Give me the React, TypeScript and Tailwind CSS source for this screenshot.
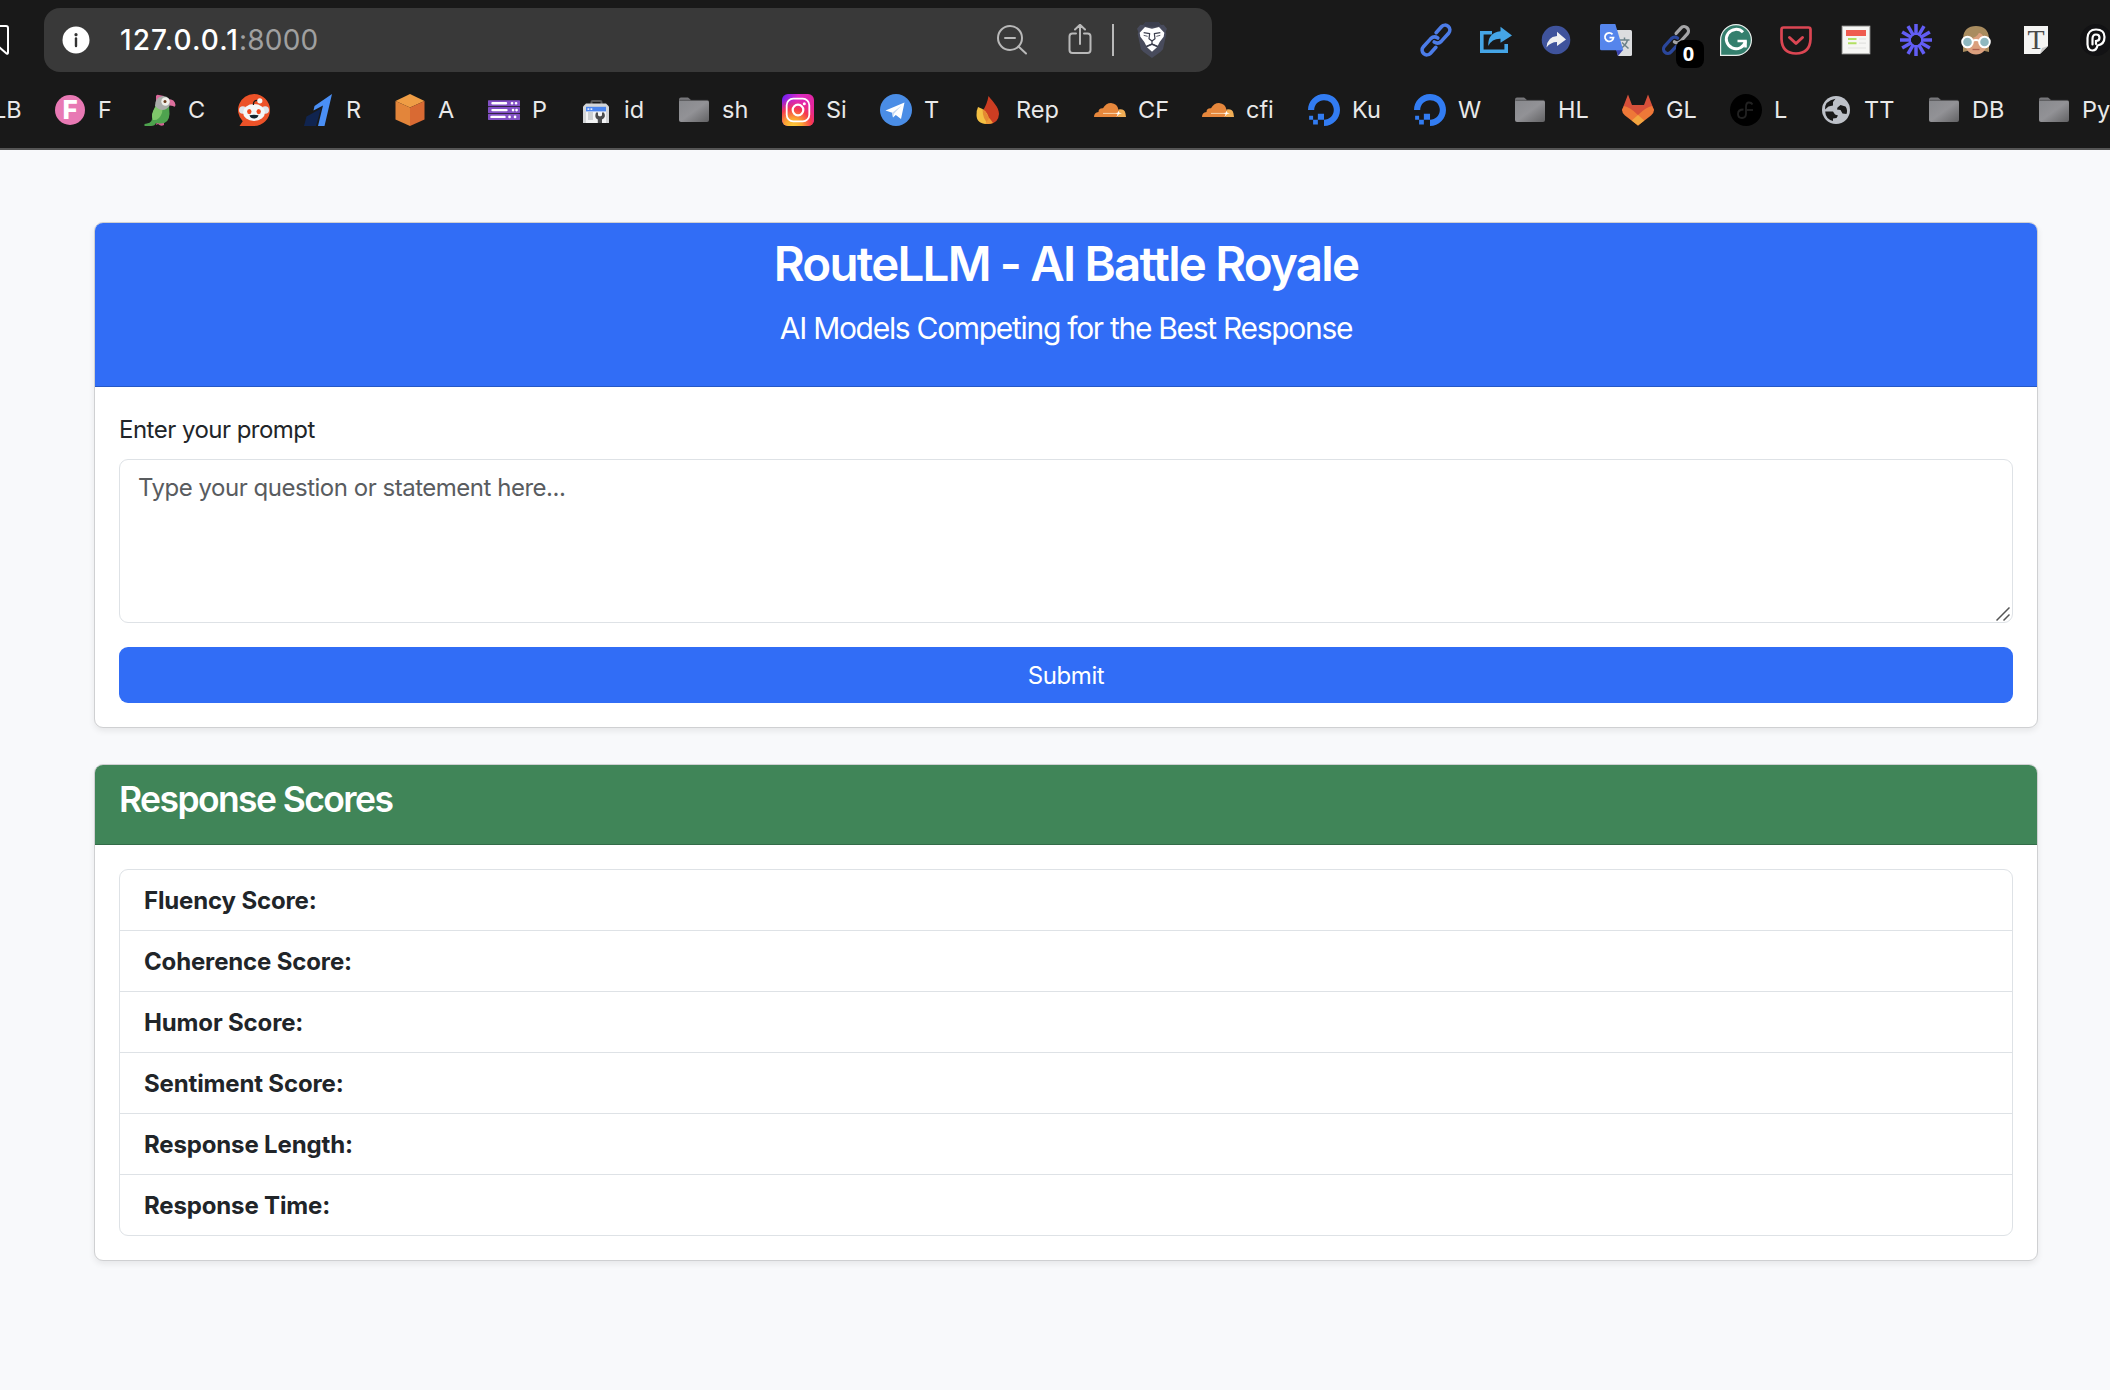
import type { ReactNode } from 'react';
import { SiDigitalocean } from 'react-icons/si';

const svg = 'block h-8 w-8 shrink-0 overflow-visible';

function Folder() {
  return (
    <svg viewBox="0 0 32 32" className={svg}>
      <defs>
        <linearGradient id="folderFill" x1="0" y1="0" x2="1" y2="1">
          <stop offset="0" stopColor="#88898d" />
          <stop offset="0.5" stopColor="#929296" />
          <stop offset="1" stopColor="#626264" />
        </linearGradient>
      </defs>
      <path d="M1 9V5.5Q1 3.5 3 3.5H10L12.5 5.5V9Z" fill="#77777a" />
      <rect x="1" y="6.2" width="30" height="21.8" rx="2" fill="url(#folderFill)" />
      <path d="M1.5 6.3H30" stroke="#4a4a4c" strokeWidth="0.8" />
    </svg>
  );
}

function LetterF() {
  return (
    <span className="mr-px ml-px flex h-[30px] w-[30px] shrink-0 items-center justify-center rounded-full bg-[#e879b4] text-[26px] leading-none font-extrabold text-white">
      F
    </span>
  );
}

function Parrot() {
  return (
    <svg viewBox="0 0 32 32" className={svg}>
      <path d="M12 8L12 2Q13 0 15 1L20 2L16 8Z" fill="#d9689a" />
      <path d="M24 5Q31 5 31.500 11Q31 14 29 12L23 11Z" fill="#dd6f9d" />
      <path d="M13 27H20L20 31Q17 33 14 30L12 31Z" fill="#d45f93" />
      <path d="M12 10Q9 18 8 22Q9 29 3 29.500L0.500 30V32H7Q11 32 12 29Q25 32 25.500 20L25 11Z" fill="#4ea34e" />
      <path d="M12 12Q6 20 9 26Q15 27 18 19L19 12Z" fill="#7fc66a" />
      <path d="M11 12Q11 3 19 2Q27 2 25.500 12Q19 20 11 12Z" fill="#a9aca9" />
      <circle cx="21.500" cy="7.500" r="4.200" fill="#efefeb" />
      <circle cx="21" cy="7.500" r="1.500" fill="#6b3c1d" />
    </svg>
  );
}

function Reddit() {
  return (
    <svg viewBox="0 0 32 32" className={svg}>
      <path d="M16 0A16 16 0 1 1 16 32H1.500L4.700 27.300A16 16 0 0 1 16 0Z" fill="#ec5228" />
      <circle cx="4.800" cy="16" r="3.800" fill="#dfe5ea" />
      <circle cx="27.200" cy="16" r="3.800" fill="#dfe5ea" />
      <ellipse cx="16" cy="18.500" rx="11" ry="8.500" fill="#f4f7f8" />
      <path d="M15.500 11Q15 6 20 6.500" fill="none" stroke="#1a1a1a" strokeWidth="1.300" />
      <circle cx="21.800" cy="6.800" r="2.600" fill="#f4f7f8" />
      <ellipse cx="11.300" cy="17.600" rx="2.200" ry="2.600" fill="#f04a1e" />
      <ellipse cx="20.700" cy="17.600" rx="2.200" ry="2.600" fill="#f04a1e" />
      <path d="M11.500 21.300Q16 20.300 20.500 21.300Q19.500 24.500 16 24.500Q12.500 24.500 11.500 21.300Z" fill="#14252e" />
    </svg>
  );
}

function BlueOne() {
  return (
    <svg viewBox="0 0 32 32" className={svg}>
      <path d="M30 0L12.500 12L11.500 16.500L21 11.500L16 32H22.500Z" fill="#4a8ff5" />
      <path d="M19 14.500L4.500 22.500L2 32H14Z" fill="#10244f" />
    </svg>
  );
}

function Cube() {
  return (
    <svg viewBox="0 0 32 32" className={svg}>
      <path d="M16 0L30.500 7L16 13.500L1.500 7Z" fill="#ef9d45" />
      <path d="M1.500 7L16 13.500V32L1.500 25.500Z" fill="#e3853a" />
      <path d="M30.500 7L16 13.500V32L30.500 25.500Z" fill="#d96a33" />
    </svg>
  );
}

function Servers() {
  return (
    <svg viewBox="0 0 32 32" className={svg}>
      {[6.2, 13, 19.8].map((y) => (
        <rect key={y} x="0" y={y} width="32" height="6.100" rx="0.600" fill="#8250c4" />
      ))}
      <g stroke="#fff" strokeLinecap="round" strokeWidth="2.400">
        <path d="M4.500 9.300H18M4.500 16.100H18.500M3.500 22.900H16.500" />
        <path d="M24 9.300h.1M28 9.300h.1M25 16.100h.1M28.500 16.100h.1M21.500 22.900h.1M27 22.900h.1" strokeWidth="2.600" />
      </g>
    </svg>
  );
}

function Toolbox() {
  return (
    <svg viewBox="0 0 32 32" className={svg}>
      <path d="M11.500 10V8Q11.500 7 12.500 7H20.500Q21.500 7 21.500 8V10" fill="none" stroke="#555" strokeWidth="2" />
      <path d="M3 29V12.500L6 9.500H26L29 12.500V29Z" fill="#d4d6d8" />
      <rect x="6" y="17" width="20" height="12" fill="#f3f4f5" />
      <rect x="6" y="12.800" width="20" height="4.600" fill="#4b86f0" />
      <path d="M7.500 14.200h1.800v1.800H7.500zM10.500 14.200h1.800v1.800h-1.800z" fill="#dfe9ff" />
      <rect x="8" y="18" width="5" height="8" fill="#cdd0d3" />
      <path d="M16 18.500Q14 24 17.800 25.500V29H22V25.500Q26.500 23.500 24 18.500L22 18.500V21.500L20 22.500L18 21.500V18.500Z" fill="#4b4c4e" />
    </svg>
  );
}

function Instagram() {
  return (
    <svg viewBox="0 0 32 32" className={svg}>
      <defs>
        <linearGradient id="igA" x1="0" y1="0.100" x2="1" y2="0.400">
          <stop offset="0" stopColor="#6b1ff5" />
          <stop offset="0.450" stopColor="#d92bc8" />
          <stop offset="1" stopColor="#e6259a" />
        </linearGradient>
        <radialGradient id="igB" cx="0.350" cy="1.050" r="0.950">
          <stop offset="0" stopColor="#fbd23c" />
          <stop offset="0.300" stopColor="#fba632" />
          <stop offset="0.620" stopColor="#f6394f" />
          <stop offset="1" stopColor="#e6259a" stopOpacity="0" />
        </radialGradient>
      </defs>
      <rect width="32" height="32" rx="6" fill="url(#igA)" />
      <rect width="32" height="32" rx="6" fill="url(#igB)" />
      <rect x="4.700" y="4.700" width="22.600" height="22.600" rx="6.500" fill="none" stroke="#fff" strokeWidth="1.800" />
      <circle cx="16" cy="16" r="5.300" fill="none" stroke="#fff" strokeWidth="2.200" />
      <circle cx="22.300" cy="9.700" r="1.500" fill="#fff" />
    </svg>
  );
}

function Telegram() {
  return (
    <svg viewBox="0 0 32 32" className={svg}>
      <circle cx="16" cy="16" r="16" fill="#4a8de6" />
      <path d="M5.500 16.500L24.500 8.500L21 25L15.800 21L13 23.500L12.200 18.800Z" fill="#fff" />
      <path d="M12.200 18.800L21.500 11.500L14 19.800L13 23.500Z" fill="#c6d9f2" />
    </svg>
  );
}

function Flame() {
  return (
    <svg viewBox="0 0 32 32" className={svg}>
      <path d="M16.500 2C21 8 27 13 27 20Q26.500 29 17.500 30Q10 27 10.500 17Q15 11 16.500 2Z" fill="#cc3d22" />
      <path d="M6 13Q18 17 17 30Q4.500 30.500 4.500 21Q4.500 16 6 13Z" fill="#f4c043" />
      <path d="M10.600 15.500Q18 20 17 30Q10.500 26 10.600 15.500Z" fill="#e58a32" />
      <path d="M13 29.500L17.500 24L21 29Q17 30.800 13 29.500Z" fill="#ee9a37" />
    </svg>
  );
}

function Cloudflare() {
  return (
    <svg viewBox="0 0 32 32" className={svg}>
      <path d="M23 23L24.500 15.500Q30.500 14.500 31.500 19.500L32 23Z" fill="#f0ad55" />
      <path d="M0 23Q0 18.500 4.500 18Q4.500 14 9 14.300Q12 9 17 9Q23.500 9.500 24.500 16L23.500 23Z" fill="#e6873c" />
      <path d="M9 19.400H24" stroke="#fbdcb8" strokeWidth="0.900" />
      <path d="M24.500 16.500L25.300 18.700L28 19.300L25 20.100L22.500 23L23.600 19.800L21.500 19.200L24 18.600Z" fill="#fff" />
    </svg>
  );
}

function GitLab() {
  return (
    <svg viewBox="0 0 32 32" className={svg}>
      <path d="M6 0.500L10 11H22L26 0.500L32 16L16 31.500L0 16Z" fill="#d7503a" />
      <path d="M0 16L2 12Q8 13 16 21Q24 13 30 12L32 16Q32 19 29 21.500L16 31.500L3 21.500Q0 19 0 16Z" fill="#ee7838" />
      <path d="M16 21L22.300 26.500L16 31.500L9.700 26.500Z" fill="#f2a640" />
    </svg>
  );
}

function DarkNote() {
  return (
    <svg viewBox="0 0 32 32" className={svg}>
      <circle cx="16" cy="16" r="16" fill="#000" />
      <g fill="none" stroke="#222" strokeWidth="1.800">
        <path d="M13.500 15.500Q8 15.500 8 20Q8 24 12 24Q16 24 16 19.500V13Q16 8.500 19 8.500Q21.500 8.500 22.500 10.500" />
        <path d="M16.500 16H23" />
      </g>
    </svg>
  );
}

function Globe() {
  return (
    <svg viewBox="0 0 32 32" className={svg}>
      <circle cx="16" cy="16" r="14" fill="#bdc1c8" />
      <path d="M15.500 4.800L13 8V11.500L8.500 12.500L5 15.500Q4.500 7 15.500 4.800Z" fill="#191919" />
      <path d="M17.500 13.500L20.500 11L25.500 12.500Q28 16 26.500 20L22.500 19.500L20.500 16L17 15.500Z" fill="#191919" />
      <path d="M5.200 17.500H13L15 20.500L18 21.500L16.500 24L13 24.500V27Q5.500 25 5.200 17.500Z" fill="#191919" />
    </svg>
  );
}

function Ocean() {
  return <SiDigitalocean className="block h-8 w-8 shrink-0 text-[#327cf2]" />;
}

type Bookmark = { label: string; width: string; icon: ReactNode };

const bookmarks: Bookmark[] = [
  { label: 'F', width: 'w-[90px]', icon: <LetterF /> },
  { label: 'C', width: 'w-[94px]', icon: <Parrot /> },
  { label: '', width: 'w-[64px]', icon: <Reddit /> },
  { label: 'R', width: 'w-[92px]', icon: <BlueOne /> },
  { label: 'A', width: 'w-[94px]', icon: <Cube /> },
  { label: 'P', width: 'w-[92px]', icon: <Servers /> },
  { label: 'id', width: 'w-[98px]', icon: <Toolbox /> },
  { label: 'sh', width: 'w-[104px]', icon: <Folder /> },
  { label: 'Si', width: 'w-[98px]', icon: <Instagram /> },
  { label: 'T', width: 'w-[92px]', icon: <Telegram /> },
  { label: 'Rep', width: 'w-[122px]', icon: <Flame /> },
  { label: 'CF', width: 'w-[108px]', icon: <Cloudflare /> },
  { label: 'cfi', width: 'w-[106px]', icon: <Cloudflare /> },
  { label: 'Ku', width: 'w-[106px]', icon: <Ocean /> },
  { label: 'W', width: 'w-[100px]', icon: <Ocean /> },
  { label: 'HL', width: 'w-[108px]', icon: <Folder /> },
  { label: 'GL', width: 'w-[108px]', icon: <GitLab /> },
  { label: 'L', width: 'w-[90px]', icon: <DarkNote /> },
  { label: 'TT', width: 'w-[108px]', icon: <Globe /> },
  { label: 'DB', width: 'w-[110px]', icon: <Folder /> },
  { label: 'Py', width: 'w-[90px]', icon: <Folder /> },
];

function ChainLink({ top, bottom }: { top: string; bottom: string }) {
  return (
    <svg viewBox="0 0 32 32" className={svg} fill="none" strokeWidth="3.600" strokeLinecap="round">
      <g transform="rotate(-48 16 16)">
        <path d="M21.500 11.200H29.500A4.800 4.800 0 0 1 29.500 20.800H18.500Q14 20.500 13.300 16" stroke={top} />
        <path d="M10.500 20.800H2.500A4.800 4.800 0 0 1 2.500 11.200H13.500Q18 11.500 18.700 16" stroke={bottom} />
      </g>
    </svg>
  );
}

function ShareBox() {
  return (
    <svg viewBox="0 0 32 32" className={svg}>
      <path d="M12 8.700H1.800V27.300H26.200V20" fill="none" stroke="#45a5e6" strokeWidth="3.600" />
      <path d="M20.500 2.800L32 11.500L20.500 18.800V14.800Q12 14.500 8.300 22Q7.500 9 20.500 7.300Z" fill="#45a5e6" stroke="#191919" strokeWidth="1" paintOrder="stroke" />
    </svg>
  );
}

function ShareCircle() {
  return (
    <svg viewBox="0 0 32 32" className={svg}>
      <circle cx="16" cy="16" r="14.300" fill="#3f539c" />
      <path d="M17 7.800L26 15.500L17 22V18Q10.500 18 6.500 23.500Q7 13 17 12Z" fill="#eff0f2" />
    </svg>
  );
}

function Translate() {
  return (
    <svg viewBox="0 0 32 32" className={svg}>
      <path d="M12 6H30.500Q32 6 32 7.500V30.500Q32 32 30.500 32H18Z" fill="#dcdddf" />
      <path d="M20 16H29.500M24.500 13.500V16M27.500 16Q26 21.500 20.500 24.500M22 18.500L28.500 24.500" fill="none" stroke="#6c8289" strokeWidth="1.500" />
      <path d="M16 26H23L18 32Z" fill="#3a44b0" />
      <path d="M1.500 0H15.300L23.300 26.300H1.500Q0 26.300 0 24.800V1.500Q0 0 1.500 0Z" fill="#5585ec" />
      <path d="M12.500 10.300A4.300 4.300 0 1 0 13.500 13.600H9.500" fill="none" stroke="#fff" strokeWidth="1.800" />
    </svg>
  );
}

function Grammarly() {
  return (
    <svg viewBox="0 0 32 32" className={svg}>
      <path d="M16 0.600A15.400 15.400 0 1 1 16 31.400H0.600V16A15.400 15.400 0 0 1 16 0.600Z" fill="#347f6d" stroke="#e9eeec" strokeWidth="1.200" />
      <path d="M23 8.300A9.700 9.700 0 1 0 25.500 17.200" fill="none" stroke="#fff" strokeWidth="3" />
      <path d="M17.500 17H25.500V23.500" fill="none" stroke="#fff" strokeWidth="2.600" />
    </svg>
  );
}

function Pocket() {
  return (
    <svg viewBox="0 0 32 32" className={svg} fill="none" stroke="#dc4653" strokeLinecap="round" strokeLinejoin="round">
      <path d="M3.500 3.500H28.500Q30.500 3.500 30.500 5.500V15Q30 29.300 16 29.500Q2 29.300 1.500 15V5.500Q1.500 3.500 3.500 3.500Z" strokeWidth="2.700" />
      <path d="M9.500 13.500L16 19.500L22.500 13.500" strokeWidth="3" />
    </svg>
  );
}

function PageIcon() {
  return (
    <svg viewBox="0 0 32 32" className={svg}>
      <rect x="2.200" y="2.200" width="27.600" height="27.600" fill="#f6f6f4" stroke="#b9b9b7" strokeWidth="1" />
      <rect x="6" y="6" width="20" height="6" fill="#ef5c50" />
      <path d="M8 15H16.500M8 19.200H16.500" stroke="#b2e061" strokeWidth="2" />
      <path d="M19 15H26M19 19.200H26M8 24H26" stroke="#e2e2e0" strokeWidth="1.200" />
    </svg>
  );
}

function Starburst() {
  return (
    <svg viewBox="0 0 32 32" className={svg}>
      {Array.from({ length: 12 }, (_, i) => (
        <path key={i} d="M16 0V11" stroke="#625df5" strokeWidth="3.500" transform={`rotate(${i * 30} 16 16)`} />
      ))}
      <circle cx="16" cy="16" r="6.300" fill="none" stroke="#625df5" strokeWidth="2" />
    </svg>
  );
}

function GlassesFace() {
  return (
    <svg viewBox="0 0 32 32" className={svg}>
      <path d="M3 28V14Q4 2 16 2Q28 2 29 14V28Q16 24 3 28Z" fill="#a98c5f" />
      <ellipse cx="16" cy="19.500" rx="11" ry="11" fill="#dba07e" />
      <path d="M5 16Q17 15 20 7Q22 12 27 15Q27 4 16 3Q5 4 5 16Z" fill="#a98c5f" />
      <circle cx="7.500" cy="18" r="5.300" fill="#8fb8c0" stroke="#fff" strokeWidth="2" />
      <circle cx="24.500" cy="18" r="5.300" fill="#8fb8c0" stroke="#fff" strokeWidth="2" />
      <path d="M12.500 17Q16 15 19.500 17" stroke="#fff" strokeWidth="2" fill="none" />
      <path d="M12.500 25.500H19.500" stroke="#b0604f" strokeWidth="1.300" />
    </svg>
  );
}

function TypeSheet() {
  return (
    <span className="flex h-8 w-8 shrink-0 items-center justify-center">
      <span className="relative flex h-7 w-6 items-center justify-center bg-[#f4f4f3] font-['Liberation_Serif',serif] text-[28px] leading-none text-[#4a4a4a]">
        T
        <svg viewBox="0 0 8 8" className="absolute right-0 bottom-0 h-2 w-2">
          <path d="M0 8L8 0V8Z" fill="#191919" />
          <path d="M0 8L2 2L8 0Z" fill="#c9c9c9" />
        </svg>
      </span>
    </span>
  );
}

function LoopP() {
  return (
    <svg viewBox="0 0 32 32" className={svg}>
      <circle cx="16" cy="16" r="16" fill="#121214" />
      <g fill="none" stroke="#fff" strokeWidth="2.200" strokeLinecap="round">
        <path d="M12.500 26.500Q8 26.500 7.500 20.500V14Q8 5.500 16 5.500Q24.500 5.500 24.500 13Q24.500 20.500 17.500 21.500Q16.500 26.500 12.500 26.500Z" />
        <path d="M12.500 20.500V15Q12.500 10.500 16 10.500Q19.500 10.500 19.500 13.800Q19.500 17 16 17V20" />
      </g>
    </svg>
  );
}

function CountedLink() {
  return (
    <span className="relative block h-8 w-8 shrink-0">
      <span className="block origin-center scale-90">
        <ChainLink top="#a5a5a7" bottom="#2b479c" />
      </span>
      <span className="absolute top-4 left-4 flex h-7 w-7 items-center justify-center rounded-lg bg-black pr-[3px] font-['Open_Sans',sans-serif] text-[20px] leading-none font-bold text-white">
        0
      </span>
    </span>
  );
}

function BraveLion() {
  return (
    <svg viewBox="0 0 90 108" className="mr-[45px] h-9 w-[30px] shrink-0">
      <path d="M26 0H64L72 9L80 8L90 20L86 30L88 36L78 82L70 90L45 108L20 90L12 82L2 36L4 30L0 20L10 8L18 9Z" fill="#484b5c" />
      <path d="M26 0H64L72 9L60 14H30L18 9Z" fill="#3c3f4e" />
      <path d="M24 15L45 20L66 15L82 32L80 44L68 60L62 72L45 64L28 72L22 60L10 44L8 32Z" fill="#fff" />
      <path d="M45 69L60 76L45 89L30 76Z" fill="#fff" />
      <g fill="none" stroke="#3c3f4e" strokeWidth="3.600" strokeLinejoin="round">
        <path d="M20 32L38 35L36 50L45 57L54 50L52 35L70 32" />
        <path d="M45 57V66M28 73L45 66L62 73" />
        <path d="M20 40L32 43M70 40L58 43" strokeWidth="2.500" />
      </g>
    </svg>
  );
}

function AddressBar() {
  return (
    <div className="flex h-16 w-[1168px] shrink-0 items-center rounded-2xl bg-[#393939] pl-[18px]">
      <svg viewBox="0 0 28 28" className="h-7 w-7">
        <circle cx="14" cy="14" r="13.500" fill="#fff" />
        <circle cx="14" cy="8.700" r="1.600" fill="#333" />
        <path d="M14 12.500V20" stroke="#333" strokeWidth="2.400" strokeLinecap="round" />
      </svg>
      <span className="ml-[30px] grow text-[28px] leading-none tracking-[0.2px] text-[#a0a0a0]">
        <span className="font-medium tracking-[1.1px] text-white">127.0.0.1</span>:8000
      </span>
      <svg viewBox="0 0 32 32" className="mr-[40px] h-8 w-8" fill="none" stroke="#b9b9b9" strokeWidth="2" strokeLinecap="round">
        <circle cx="14" cy="14" r="12" />
        <path d="M9 14H19M22.500 22.500L30 29.500" />
      </svg>
      <svg viewBox="0 0 24 32" className="mr-[20px] h-8 w-6" fill="none" stroke="#b9b9b9" strokeWidth="2" strokeLinecap="round" strokeLinejoin="round">
        <path d="M8 9.500H4.500Q1.500 9.500 1.500 12.500V26Q1.500 29 4.500 29H19.500Q22.500 29 22.500 26V12.500Q22.500 9.500 19.500 9.500H16M12 20V1M7 5.500L12 0.800L17 5.500" />
      </svg>
      <span className="mr-[23px] h-8 w-0.5 bg-[#b9b9b9]" />
      <BraveLion />
    </div>
  );
}

function BrowserChrome() {
  return (
    <header className="flex h-[150px] flex-col overflow-hidden border-b-2 border-[#555555] bg-[#191919] pt-2">
      <div className="flex h-16 items-center">
        <span className="flex w-11 shrink-0 items-center">
          <svg viewBox="0 0 10 32" className="h-8 w-[10px]" fill="none" stroke="#fff" strokeWidth="2" strokeLinejoin="round">
            <path d="M-8 2H6Q8 2 8 4V28.500Q8 30.500 6.500 29.500L-1 23" />
          </svg>
        </span>
        <AddressBar />
        <div className="ml-[208px] flex shrink-0 items-center gap-7">
          <ChainLink top="#4c7ce8" bottom="#4c7ce8" />
          <ShareBox />
          <ShareCircle />
          <Translate />
          <CountedLink />
          <Grammarly />
          <Pocket />
          <PageIcon />
          <Starburst />
          <GlassesFace />
          <TypeSheet />
          <LoopP />
        </div>
      </div>
      <nav className="flex h-[76px] items-center text-[23.5px] leading-none whitespace-nowrap text-[#e9e9e9]">
        <span className="flex w-[54px] shrink-0">
          <span className="-ml-[7px]">LB</span>
        </span>
        {bookmarks.map((b, i) => (
          <span key={i} className={`flex shrink-0 items-center gap-3 ${b.width}`}>
            {b.icon}
            {b.label && <span>{b.label}</span>}
          </span>
        ))}
      </nav>
    </header>
  );
}

const card = 'rounded-[9px] border border-[#cfd0d2] bg-white shadow-[0_3px_6px_rgba(0,0,0,0.075)]';

const scores = ['Fluency Score:', 'Coherence Score:', 'Humor Score:', 'Sentiment Score:', 'Response Length:', 'Response Time:'];

export default function App() {
  return (
    <div className="h-[1390px] w-[2110px] overflow-hidden bg-[#f8f9fb] font-['Inter',sans-serif] text-[#212529]">
      <BrowserChrome />
      <main className="mt-[72px] ml-[94px] flex w-[1944px] flex-col gap-9 text-[24px] leading-9">
        <section className={card}>
          <div className="h-[164px] rounded-t-lg border-b border-[#2558c5] bg-[#316df6] px-6 pt-3 text-center text-white">
            <h2 className="mb-[13px] text-[47.5px] leading-[57.6px] font-semibold tracking-[-1.8px]">RouteLLM - AI Battle Royale</h2>
            <p className="text-[30px] leading-[45px] font-normal tracking-[-1.3px]">AI Models Competing for the Best Response</p>
          </div>
          <form className="p-6" onSubmit={(e) => e.preventDefault()}>
            <label htmlFor="prompt" className="mb-[11px] block pt-px tracking-[-0.52px]">
              Enter your prompt
            </label>
            <div className="relative mb-6 h-[164px]">
              <textarea
                id="prompt"
                placeholder="Type your question or statement here..."
                className="block h-full w-full resize-none rounded-[9px] border border-[#dee2e6] bg-white px-[18px] pt-[10px] pb-2 leading-9 tracking-[-0.48px] placeholder:text-[#595c5f]"
              />
              <svg viewBox="0 0 14 14" className="absolute right-[3px] bottom-[2px] h-[14px] w-[14px]" stroke="#555" strokeWidth="1.500">
                <path d="M0.500 13.500L13.500 0.500M7.500 13.500L13.500 7.500" />
              </svg>
            </div>
            <button type="submit" className="block h-14 w-full rounded-[9px] bg-[#316df6] pt-0.5 text-center leading-9 tracking-[-0.4px] text-white">
              Submit
            </button>
          </form>
        </section>

        <section className={card}>
          <div className="h-20 rounded-t-lg border-b border-[#336b48] bg-[#408558] px-6 pt-[13px] text-white">
            <h4 className="text-[35.5px] leading-[43.2px] font-semibold tracking-[-1.6px]">Response Scores</h4>
          </div>
          <div className="p-6">
            <ul className="divide-y divide-[#dee2e6] rounded-[9px] border border-[#dee2e6]">
              {scores.map((s) => (
                <li key={s} className="h-[61px] px-6 pt-[13px] font-bold tracking-[-0.15px] last:h-[60px]">
                  {s}
                </li>
              ))}
            </ul>
          </div>
        </section>
      </main>
    </div>
  );
}
